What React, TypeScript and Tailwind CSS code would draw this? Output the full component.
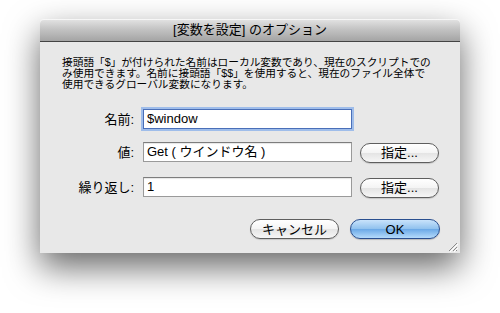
const fontStack = "font-['Liberation_Sans','Noto_Sans_CJK_JP',sans-serif]";

function PillButton({ label, width }: { label: string; width: string }) {
  return (
    <button
      type="button"
      className={`${width} h-[20px] rounded-full border border-[#5e5e5e] bg-[linear-gradient(#ffffff,#f4f4f4_50%,#e4e4e4_51%,#f6f6f6)] text-[13px] leading-none text-black shadow-[0_1px_1px_rgba(0,0,0,0.15)]`}
    >
      {label}
    </button>
  );
}

function FieldRow({
  label,
  value,
  focused,
  withButton
}: {
  label: string;
  value: string;
  focused?: boolean;
  withButton?: boolean;
}) {
  return (
    <div className="flex items-center">
      <span className="w-[96px] pr-[2px] text-right text-[13px] leading-none text-black">{label}</span>
      <div
        className={`ml-[7px] h-[20px] w-[209px] border bg-white px-[3px] pt-[1px] text-[13px] leading-[15px] text-black ${
          focused
            ? "border-[#4a6fb8] shadow-[0_0_0_2px_#9fbdea]"
            : "border-[#9a9a9a] border-t-[#7d7d7d] shadow-[inset_0_1px_1px_rgba(0,0,0,0.1)]"
        }`}
      >
        {value}
      </div>
      {withButton ? (
        <div className="ml-[8px]">
          <PillButton label="指定..." width="w-[79px]" />
        </div>
      ) : null}
    </div>
  );
}

export default function App() {
  return (
    <div className={`flex h-[313px] w-[500px] justify-center bg-white pt-[19px] ${fontStack}`}>
      <div className="flex h-[234px] w-[420px] flex-col rounded-t-[4px] shadow-[0_14px_34px_rgba(0,0,0,0.6)]">
        <div className="flex h-[23px] items-center justify-center rounded-t-[4px] border-b border-[#444] bg-[linear-gradient(#e4e4e4,#c4c4c4_45%,#a4a4a4)] text-[13px] text-black shadow-[inset_0_1px_0_rgba(255,255,255,0.7)]">
          [変数を設定] のオプション
        </div>
        <div className="relative flex flex-1 flex-col bg-[#e8e8e8]">
          <p className="pl-[22px] pt-[15px] text-[10.7px] leading-[11px] text-black">
            接頭語「$」が付けられた名前はローカル変数であり、現在のスクリプトでの
            <br />
            み使用できます。名前に接頭語「$$」を使用すると、現在のファイル全体で
            <br />
            使用できるグローバル変数になります。
          </p>
          <div className="mt-[19px] flex flex-col gap-[11px]">
            <FieldRow label="名前:" value="$window" focused />
            <FieldRow label="値:" value="Get ( ウインドウ名 )" withButton />
            <FieldRow label="繰り返し:" value="1" withButton />
          </div>
          <div className="mt-[20px] flex justify-end gap-[11px] pr-[20px]">
            <PillButton label="キャンセル" width="w-[89px]" />
            <button
              type="button"
              className="h-[20px] w-[90px] rounded-full border border-[#2a4f8f] bg-[linear-gradient(#c9e3fb,#8fc1ee_50%,#6aa8e6_51%,#b5dbfb)] text-[13px] leading-none text-black shadow-[0_1px_1px_rgba(0,0,0,0.2)]"
            >
              OK
            </button>
          </div>
          <svg className="absolute bottom-[1px] right-[2px]" width="11" height="11" viewBox="0 0 11 11">
            <path d="M10 2 L2 10 M10 6 L6 10 M10 9 L9 10" stroke="#8a8a8a" strokeWidth="1" />
            <path d="M11 3 L3 11 M11 7 L7 11" stroke="#ffffff" strokeWidth="1" />
          </svg>
        </div>
      </div>
    </div>
  );
}
